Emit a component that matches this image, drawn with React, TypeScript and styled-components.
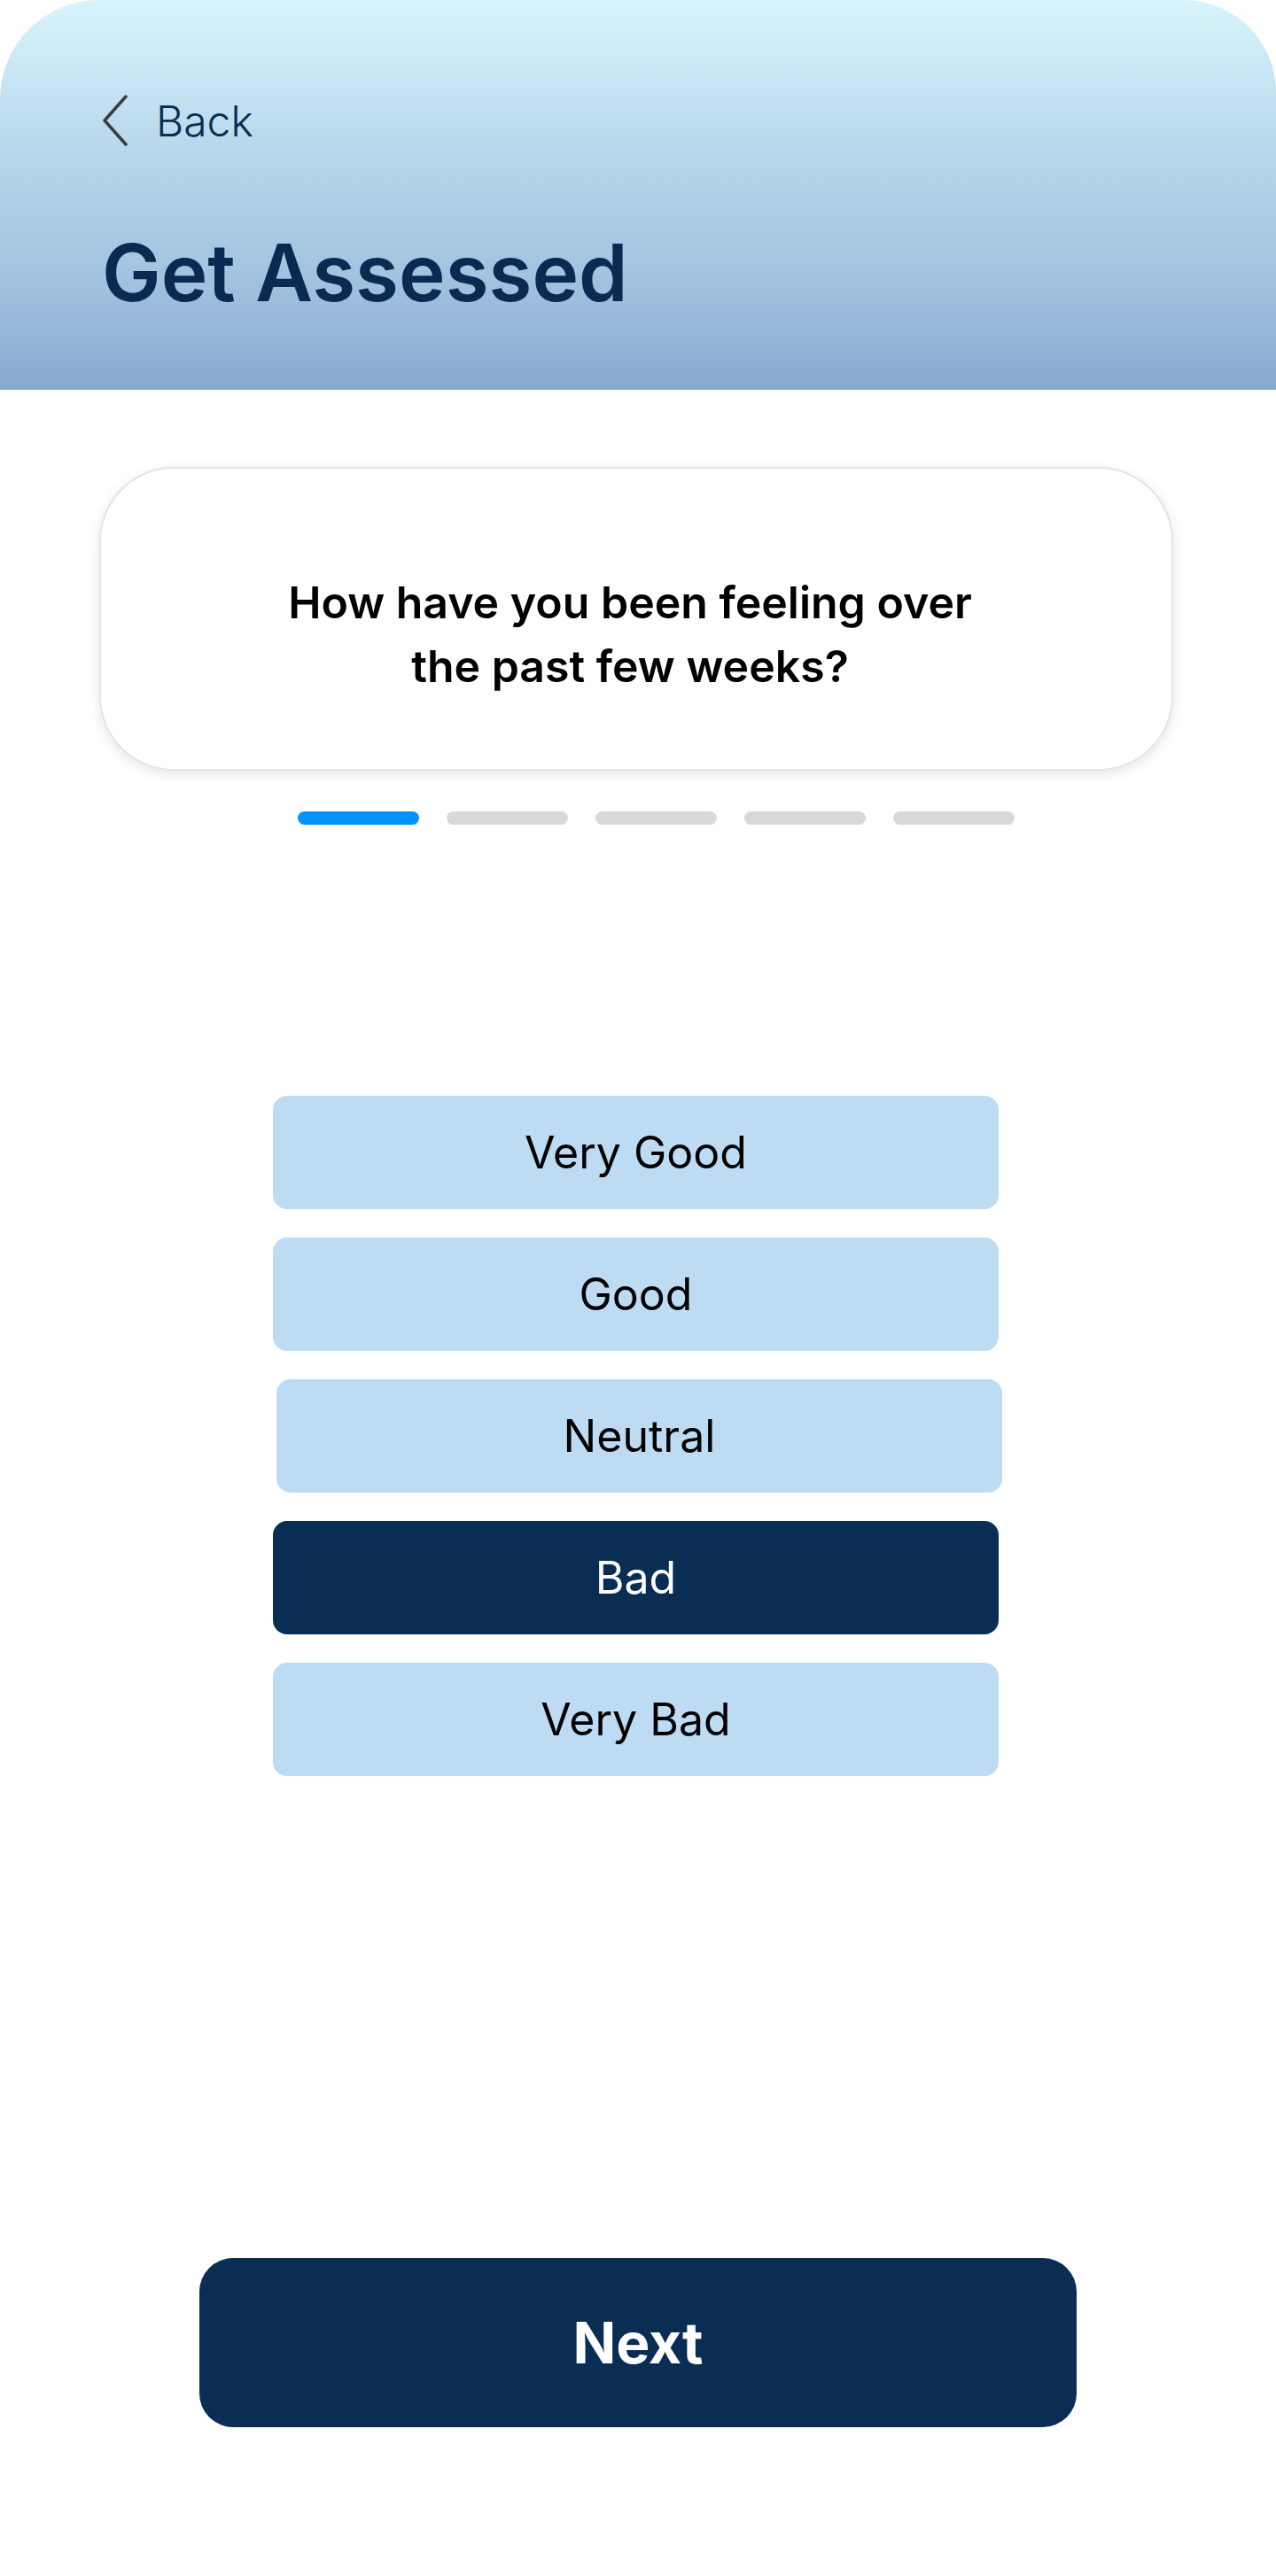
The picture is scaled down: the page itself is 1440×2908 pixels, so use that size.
import React, { useState } from "react";
import styled, { createGlobalStyle } from "styled-components";

const options = ["Very Good", "Good", "Neutral", "Bad", "Very Bad"];

const App = () => {
  const [picked, setPicked] = useState("Bad");

  return (
    <Page>
      <Global />
      <Header>
        <BackRow>
          <svg width="30" height="58" viewBox="0 0 30 58">
            <path d="M27 2 L3 29 L27 56" fill="none" stroke="#3c3c3c" strokeWidth="3.5" strokeLinejoin="round" strokeLinecap="round" />
          </svg>
          <span>Back</span>
        </BackRow>
        <Title>Get Assessed</Title>
      </Header>

      <QuestionCard>
        <p>
          How have you been feeling over
          <br />
          the past few weeks?
        </p>
      </QuestionCard>

      <Steps>
        {[0, 1, 2, 3, 4].map((i) => (
          <Step key={i} active={i === 0} />
        ))}
      </Steps>

      <Options>
        {options.map((o) => (
          <Option key={o} selected={picked === o} shift={o === "Neutral"} onClick={() => setPicked(o)}>
            {o}
          </Option>
        ))}
      </Options>

      <NextButton>Next</NextButton>
    </Page>
  );
};

export default App;

const Global = createGlobalStyle`
body{
    margin: 0;
    background: #ffffff;
    font-family: Inter, "Open Sans", sans-serif;
}
`;

const Page = styled.div`
width: 1440px;
height: 2908px;
display: flex;
flex-direction: column;
background: #ffffff;
overflow: hidden;
`;

const Header = styled.div`
height: 440px;
box-sizing: border-box;
padding: 106px 0 0 115px;
border-radius: 112px 104px 0 0;
background: linear-gradient(180deg, #d8f4fd 0%, #b6d6ea 40%, #a3c4e0 70%, #86a9d0 100%);
display: flex;
flex-direction: column;
`;

const BackRow = styled.div`
display: flex;
align-items: center;
gap: 31px;
height: 60px;

span{
    font-size: 48px;
    font-weight: 300;
    color: #0b2d52;
}
`;

const Title = styled.h1`
margin: 92px 0 0 0;
font-size: 89px;
line-height: 100px;
font-weight: 600;
color: #092b52;
`;

const QuestionCard = styled.div`
margin: 87px 0 0 112px;
width: 1212px;
height: 343px;
box-sizing: border-box;
padding-top: 34px;
border: 2px solid #e4e4e4;
border-radius: 84px;
box-shadow: 0 4px 14px rgba(0, 0, 0, 0.1);
display: flex;
justify-content: center;
align-items: center;

p{
    margin: 0 14px 0 0;
    text-align: center;
    font-size: 50px;
    line-height: 72px;
    font-weight: 600;
    color: #000000;
}
`;

const Steps = styled.div`
margin: 46px 0 0 336px;
display: flex;
gap: 31px;
`;

const Step = styled.div<{ active: boolean }>`
width: 137px;
height: 15px;
border-radius: 8px;
background: ${(p) => (p.active ? "#0094fb" : "#d9d9d9")};
`;

const Options = styled.div`
margin: 306px 0 0 308px;
display: flex;
flex-direction: column;
gap: 32px;
`;

const Option = styled.div<{ selected: boolean; shift: boolean }>`
width: 819px;
height: 128px;
margin-left: ${(p) => (p.shift ? "4px" : "0")};
border-radius: 16px;
background: ${(p) => (p.selected ? "#092d53" : "#bddcf3")};
color: ${(p) => (p.selected ? "#ffffff" : "#000000")};
display: flex;
justify-content: center;
align-items: center;
font-size: 50px;
font-weight: 400;
cursor: pointer;
`;

const NextButton = styled.button`
margin: 544px 0 0 225px;
width: 990px;
height: 191px;
border: none;
border-radius: 38px;
background: #092d53;
color: #ffffff;
font-family: Inter, "Open Sans", sans-serif;
font-size: 64px;
font-weight: 700;
cursor: pointer;
`;
